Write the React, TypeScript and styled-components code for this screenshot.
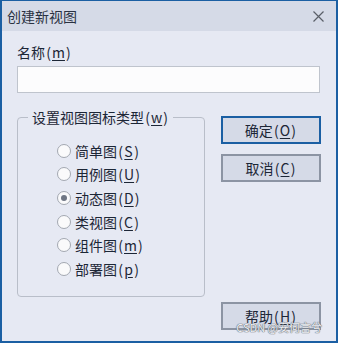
import React from "react";
import styled, { createGlobalStyle } from "styled-components";

const Global = createGlobalStyle`
  html, body { margin: 0; padding: 0; background: #e6e9f3; }
  * { box-sizing: border-box; }
`;

const FONT = `"Noto Sans CJK SC", "Noto Sans", sans-serif`;

const Window = styled.div`
  position: relative;
  width: 338px;
  height: 343px;
  border: 2px solid #1b5fa3;
  border-top-width: 1px;
  background: #e6e9f3;
  font-family: ${FONT};
  font-size: 14px;
  color: #1c2636;
  display: flex;
  flex-direction: column;
`;

const TitleBar = styled.div`
  height: 30px;
  flex: none;
  background: #d5dae7;
  display: flex;
  align-items: center;
  justify-content: space-between;
  padding: 0 12px 0 5px;
  line-height: 20px;
`;

const Title = styled.span`
  color: #2a3242;
`;

const Close = styled.svg`
  display: block;
`;

const Content = styled.div`
  flex: 1;
  padding: 11px 16px 0 15px;
  display: flex;
  flex-direction: column;
`;

const Label = styled.div`
  line-height: 20px;
  height: 20px;
`;

const Input = styled.div`
  margin-top: 4px;
  height: 27px;
  background: #fcfcfd;
  border: 1px solid #bfc4cd;
`;

const Row = styled.div`
  margin-top: 14px;
  display: grid;
  grid-template-columns: 188px 100px;
  column-gap: 16px;
  align-items: start;
`;

const Group = styled.fieldset`
  margin: 0;
  padding: 0;
  height: 190px;
  border: 1px solid #b9bec9;
  border-radius: 4px;
  min-width: 0;
`;

const Legend = styled.legend`
  margin-left: 10px;
  padding: 0 4px;
  line-height: 20px;
`;

const RadioList = styled.div`
  display: flex;
  flex-direction: column;
  padding: 12px 0 0 39px;
`;

const RadioRow = styled.div`
  display: flex;
  align-items: center;
  height: 23.6px;
  line-height: 20px;
  gap: 4px;
`;

const Circle = styled.span<{ $on?: boolean }>`
  width: 14px;
  height: 14px;
  border-radius: 50%;
  border: 1px solid #a3a8b1;
  background: #fafafb;
  display: flex;
  align-items: center;
  justify-content: center;
  &::after {
    content: "";
    width: 6px;
    height: 6px;
    border-radius: 50%;
    background: ${(p) => (p.$on ? "#6f7684" : "transparent")};
  }
`;

const Buttons = styled.div`
  display: flex;
  flex-direction: column;
  padding-top: 9px;
  gap: 10px;
`;

const Button = styled.div<{ $primary?: boolean; $push?: number }>`
  height: 28px;
  background: #d5dae7;
  border: ${(p) => (p.$primary ? "2px solid #1b5fa3" : "2px solid #8c94a3")};
  display: flex;
  align-items: center;
  justify-content: center;
  line-height: 20px;
  margin-top: ${(p) => p.$push ?? 0}px;
`;

const Paren = styled.span`
  display: inline-block;
  width: 7px;
  text-align: center;
`;

const Key = styled.u`
  display: inline-block;
  min-width: 9px;
  text-align: center;
  text-decoration: underline;
  text-underline-offset: 2px;
`;

const Watermark = styled.div`
  position: absolute;
  right: 14px;
  bottom: 7px;
  font-family: ${FONT};
  font-size: 11px;
  line-height: 13px;
  color: #eef0f4;
  text-shadow: 0 0 1px #6a6f78, 0 0 1px #6a6f78, 0 0 1px #6a6f78;
`;

const Acc = ({ text, k }: { text: string; k: string }) => (
  <span>
    {text}
    <Paren>(</Paren>
    <Key>{k}</Key>
    <Paren>)</Paren>
  </span>
);

const radios = [
  { t: "简单图", k: "S" },
  { t: "用例图", k: "U" },
  { t: "动态图", k: "D", on: true },
  { t: "类视图", k: "C" },
  { t: "组件图", k: "m" },
  { t: "部署图", k: "p" },
];

export default function App() {
  return (
    <>
      <Global />
      <Window>
        <TitleBar>
          <Title>创建新视图</Title>
          <Close width="11" height="11" viewBox="0 0 11 11">
            <path d="M0.5 0.5 L10.5 10.5 M10.5 0.5 L0.5 10.5" stroke="#5a5f68" strokeWidth="1.2" fill="none" />
          </Close>
        </TitleBar>
        <Content>
          <Label>
            <Acc text="名称" k="m" />
          </Label>
          <Input />
          <Row>
            <Group>
              <Legend>
                <Acc text="设置视图图标类型" k="w" />
              </Legend>
              <RadioList>
                {radios.map((r) => (
                  <RadioRow key={r.t}>
                    <Circle $on={r.on} />
                    <Acc text={r.t} k={r.k} />
                  </RadioRow>
                ))}
              </RadioList>
            </Group>
            <Buttons>
              <Button $primary>
                <Acc text="确定" k="O" />
              </Button>
              <Button>
                <Acc text="取消" k="C" />
              </Button>
              <Button $push={110}>
                <Acc text="帮助" k="H" />
              </Button>
            </Buttons>
          </Row>
        </Content>
        <Watermark>CSDN @安何言兮</Watermark>
      </Window>
    </>
  );
}
